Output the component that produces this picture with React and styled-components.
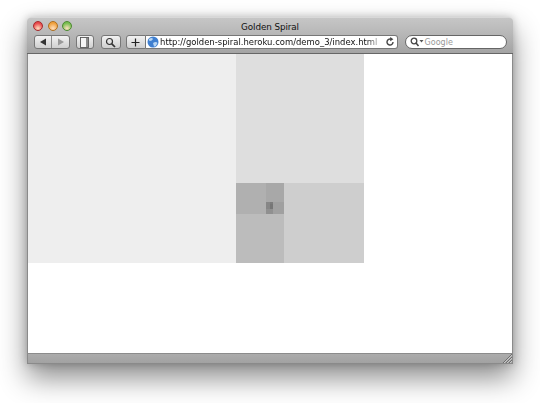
import styled, { createGlobalStyle } from "styled-components";

const GlobalStyle = createGlobalStyle`
  html, body {
    margin: 0;
    padding: 0;
    background: #fff;
  }
`;

const tiles = [
  { size: 208, side: "left", shade: "#eeeeee" },
  { size: 129, side: "top", shade: "#dedede" },
  { size: 80, side: "right", shade: "#cecece" },
  { size: 49, side: "bottom", shade: "#bcbcbc" },
  { size: 30, side: "left", shade: "#b0b0b0" },
  { size: 19, side: "top", shade: "#a8a8a8" },
  { size: 11, side: "right", shade: "#a0a0a0" },
  { size: 5, side: "bottom", shade: "#909090" },
  { size: 4, side: "left", shade: "#868686" },
  { size: 2, side: "top", shade: "#7c7c7c" },
];

const directions = {
  left: "row",
  top: "column",
  right: "row-reverse",
  bottom: "column-reverse",
};

function Spiral({ index = 0 }) {
  const tile = tiles[index];
  if (!tile) return <SpiralEnd />;
  return (
    <SpiralGroup $side={tile.side}>
      <Tile $side={tile.side} $size={tile.size} $shade={tile.shade} />
      <Spiral index={index + 1} />
    </SpiralGroup>
  );
}

function App() {
  return (
    <>
      <GlobalStyle />
      <Page>
        <Window>
          <TitleBar>
            <Lights>
              <Light $color="#e8474a" $edge="#a5282b" />
              <Light $color="#f0a03c" $edge="#b0701e" />
              <Light $color="#76bd4e" $edge="#4c8a30" />
            </Lights>
            <Title>Golden Spiral</Title>
          </TitleBar>
          <Toolbar>
            <Segmented>
              <SegmentButton>
                <svg width="8" height="8" viewBox="0 0 8 8">
                  <path d="M1 4 L7 0.5 V7.5 Z" fill="#333" />
                </svg>
              </SegmentButton>
              <SegmentButton $last>
                <svg width="8" height="8" viewBox="0 0 8 8">
                  <path d="M7 4 L1 0.5 V7.5 Z" fill="#999" />
                </svg>
              </SegmentButton>
            </Segmented>
            <ToolButton $width={18} $gap={6}>
              <svg width="11" height="11" viewBox="0 0 11 11">
                <rect x="1.5" y="0.5" width="8" height="10" fill="#f4f4f4" stroke="#555" strokeWidth="0.9" />
                <rect x="7" y="1" width="2" height="9" fill="#8a8a8a" />
              </svg>
            </ToolButton>
            <ToolButton $width={20} $gap={7}>
              <svg width="11" height="11" viewBox="0 0 11 11">
                <circle cx="4.5" cy="4.5" r="3" fill="none" stroke="#333" strokeWidth="1.2" />
                <path d="M6.8 6.8 L10 10" stroke="#333" strokeWidth="1.7" />
              </svg>
            </ToolButton>
            <AddressGroup>
              <PlusButton>
                <svg width="11" height="11" viewBox="0 0 11 11">
                  <path d="M5.5 1.5 V9.5 M1.5 5.5 H9.5" stroke="#222" strokeWidth="1.2" />
                </svg>
              </PlusButton>
              <AddressField>
                <svg width="12" height="12" viewBox="0 0 12 12">
                  <circle cx="6" cy="6" r="5.5" fill="#3f7fd0" />
                  <path d="M2 3 Q5 1 6 3 Q5 5 3 5 Q1.5 5 2 3 Z M6 7 Q9 5 10.5 7 Q9 11 7 10.5 Z" fill="#b9d6f2" />
                </svg>
                <AddressText>http://golden-spiral.heroku.com/demo_3/index.html</AddressText>
                <svg width="10" height="10" viewBox="0 0 10 10">
                  <path d="M8 5 A3 3 0 1 1 6 2.2" fill="none" stroke="#444" strokeWidth="1.4" />
                  <path d="M5.2 0 L8.4 2.2 L5.2 4.2 Z" fill="#444" />
                </svg>
              </AddressField>
            </AddressGroup>
            <SearchField>
              <svg width="14" height="10" viewBox="0 0 14 10">
                <circle cx="4" cy="4" r="2.8" fill="none" stroke="#444" strokeWidth="1.3" />
                <path d="M6 6 L8.5 9" stroke="#444" strokeWidth="1.5" />
                <path d="M9.5 3 H13.5 L11.5 5.5 Z" fill="#555" />
              </svg>
              <SearchText>Google</SearchText>
            </SearchField>
          </Toolbar>
          <Content>
            <SpiralFrame>
              <Spiral />
            </SpiralFrame>
          </Content>
          <StatusBar>
            <Grip width="10" height="10" viewBox="0 0 10 10">
              <path d="M10 1 L1 10 M10 4 L4 10 M10 7 L7 10" stroke="#6e6e6e" strokeWidth="1" />
              <path d="M10 2 L2 10 M10 5 L5 10 M10 8 L8 10" stroke="#d0d0d0" strokeWidth="0.8" />
            </Grip>
          </StatusBar>
        </Window>
      </Page>
    </>
  );
}

const Page = styled.div`
  width: 540px;
  height: 403px;
  padding: 17px 0 0 27px;
  box-sizing: border-box;
  overflow: hidden;
  font-family: "DejaVu Sans", "Liberation Sans", sans-serif;
`;

const Window = styled.div`
  width: 486px;
  height: 347px;
  display: flex;
  flex-direction: column;
  box-shadow: 0 14px 28px rgba(0, 0, 0, 0.45), 0 0 8px rgba(0, 0, 0, 0.22);
  border-radius: 4px 4px 0 0;
  background: #fff;
`;

const TitleBar = styled.div`
  height: 16px;
  box-sizing: border-box;
  flex: none;
  display: grid;
  grid-template-columns: 1fr auto 1fr;
  align-items: center;
  padding: 0 6px;
  border-radius: 4px 4px 0 0;
  border-top: 1px solid #d8d8d8;
  background: linear-gradient(#c6c6c6, #b8b8b8);
`;

const Lights = styled.div`
  display: flex;
  gap: 4.5px;
  margin-top: 1px;
`;

const Light = styled.span`
  width: 10px;
  height: 10px;
  border-radius: 50%;
  box-sizing: border-box;
  border: 1px solid ${({ $edge }) => $edge};
  background: radial-gradient(circle at 50% 80%, #ffe0c0 0%, ${({ $color }) => $color} 70%);
`;

const Title = styled.div`
  font-size: 8.8px;
  letter-spacing: -0.1px;
  color: #111;
  margin-top: 3px;
`;

const Toolbar = styled.div`
  height: 21px;
  box-sizing: border-box;
  flex: none;
  display: flex;
  align-items: flex-start;
  padding: 2px 6px 0 7px;
  background: linear-gradient(#b8b8b8, #a4a4a4);
  border-bottom: 1px solid #666;
`;

const Segmented = styled.div`
  display: flex;
  width: 36px;
  height: 14px;
  box-sizing: border-box;
  border: 1px solid #777;
  border-radius: 3px;
  overflow: hidden;
  background: linear-gradient(#f2f2f2, #cfcfcf);
`;

const SegmentButton = styled.div`
  flex: 1;
  display: flex;
  align-items: center;
  justify-content: center;
  border-right: ${({ $last }) => ($last ? "none" : "1px solid #8a8a8a")};
`;

const ToolButton = styled.div`
  width: ${({ $width }) => $width}px;
  height: 14px;
  margin-left: ${({ $gap }) => $gap}px;
  box-sizing: border-box;
  border: 1px solid #777;
  border-radius: 3px;
  display: flex;
  align-items: center;
  justify-content: center;
  background: linear-gradient(#f2f2f2, #cfcfcf);
`;

const AddressGroup = styled.div`
  display: flex;
  margin-left: 5px;
  height: 14px;
`;

const PlusButton = styled.div`
  width: 20px;
  box-sizing: border-box;
  border: 1px solid #777;
  border-radius: 3px 0 0 3px;
  display: flex;
  align-items: center;
  justify-content: center;
  background: linear-gradient(#f2f2f2, #cfcfcf);
`;

const AddressField = styled.div`
  width: 252px;
  box-sizing: border-box;
  display: flex;
  align-items: center;
  gap: 1.5px;
  padding: 0 2px 0 1px;
  background: #fff;
  border: 1px solid #777;
  border-left: none;
  border-radius: 0 3px 3px 0;
`;

const AddressText = styled.span`
  flex: 1;
  min-width: 0;
  white-space: nowrap;
  font-size: 8.45px;
  color: #111;
  margin-right: 4px;
  -webkit-mask-image: linear-gradient(to right, #000 94%, rgba(0, 0, 0, 0.3) 100%);
  mask-image: linear-gradient(to right, #000 94%, rgba(0, 0, 0, 0.3) 100%);
`;

const SearchField = styled.div`
  width: 103px;
  height: 14px;
  margin-left: 7px;
  box-sizing: border-box;
  display: flex;
  align-items: center;
  gap: 1px;
  padding-left: 4px;
  background: #fff;
  border: 1px solid #666;
  border-radius: 7px;
`;

const SearchText = styled.span`
  font-size: 8px;
  color: #999;
`;

const Content = styled.div`
  flex: 1;
  min-height: 0;
  background: #fff;
  border-left: 1px solid #8a8a8a;
  border-right: 1px solid #8a8a8a;
`;

const SpiralFrame = styled.div`
  display: flex;
  width: 336px;
  height: 209px;
`;

const SpiralGroup = styled.div`
  flex: 1;
  min-width: 0;
  min-height: 0;
  display: flex;
  flex-direction: ${({ $side }) => directions[$side]};
`;

const Tile = styled.div`
  flex: none;
  ${({ $side, $size }) =>
    $side === "left" || $side === "right" ? `width: ${$size}px;` : `height: ${$size}px;`}
  background: ${({ $shade }) => $shade};
`;

const SpiralEnd = styled.div`
  flex: 1;
  background: #767676;
`;

const StatusBar = styled.div`
  height: 11px;
  flex: none;
  position: relative;
  box-sizing: border-box;
  border: 1px solid #8a8a8a;
  border-top: 1px solid #8c8c8c;
  background: linear-gradient(#acacac, #a2a2a2);
`;

const Grip = styled.svg`
  position: absolute;
  right: 0;
  bottom: 0;
`;

export default App;
